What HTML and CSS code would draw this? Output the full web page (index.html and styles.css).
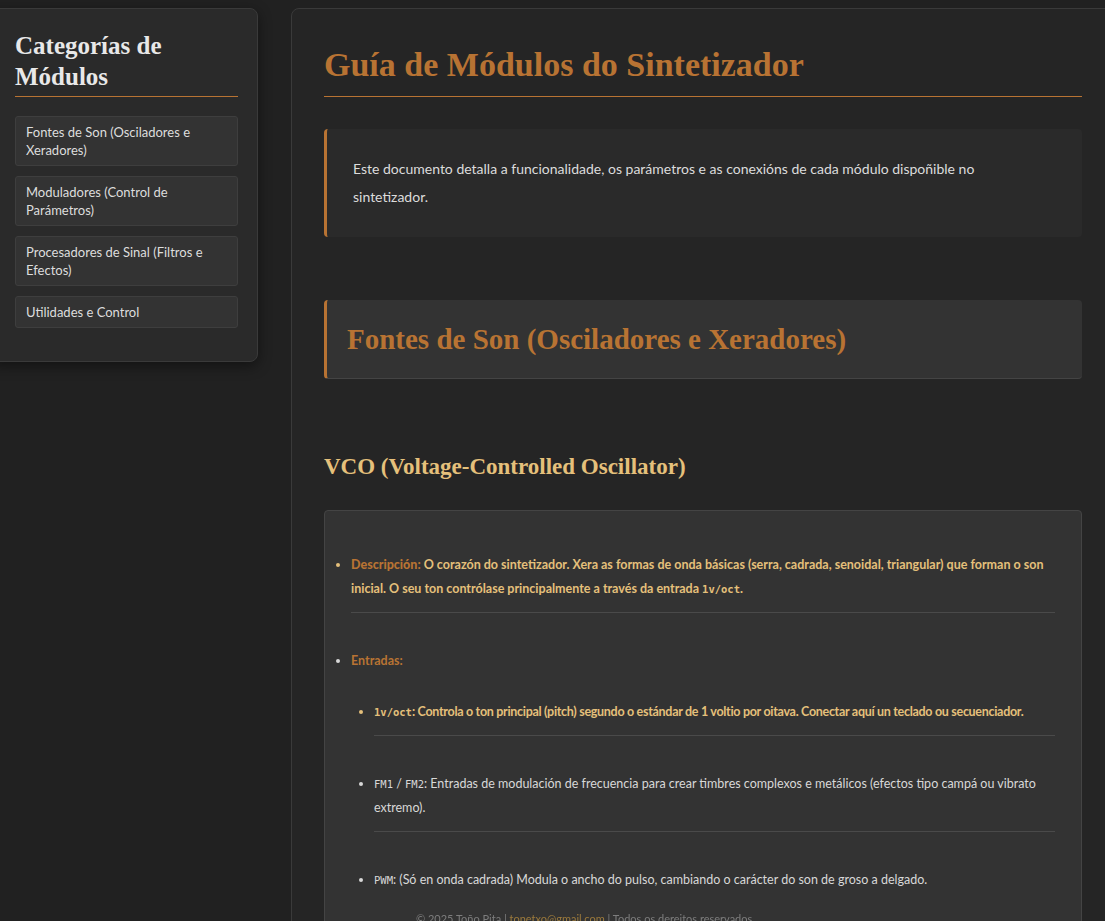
FILE: index.html
```html
<!DOCTYPE html>
<html lang="gl">
<head>
<meta charset="utf-8">
<title>Guía de Módulos do Sintetizador</title>
<link rel="stylesheet" href="styles.css">
</head>
<body>
<div class="layout">
  <aside class="sidebar">
    <h2 class="sidebar-title">Categorías de Módulos</h2>
    <nav class="cat-nav">
      <a class="cat-link" href="#fontes">Fontes de Son (Osciladores e Xeradores)</a>
      <a class="cat-link" href="#moduladores">Moduladores (Control de Parámetros)</a>
      <a class="cat-link" href="#procesadores">Procesadores de Sinal (Filtros e Efectos)</a>
      <a class="cat-link" href="#utilidades">Utilidades e Control</a>
    </nav>
  </aside>
  <main class="content">
    <h1 class="page-title">Guía de Módulos do Sintetizador</h1>
    <div class="intro">
      <p>Este documento detalla a funcionalidade, os parámetros e as conexións de cada módulo dispoñible no sintetizador.</p>
    </div>
    <h2 class="section-title" id="fontes">Fontes de Son (Osciladores e Xeradores)</h2>
    <h3 class="module-title">VCO (Voltage-Controlled Oscillator)</h3>
    <div class="module-card">
      <ul class="props">
        <li class="hl"><strong>Descripción:</strong> O corazón do sintetizador. Xera as formas de onda básicas (serra, cadrada, senoidal, triangular) que forman o son inicial. O seu ton contrólase principalmente a través da entrada <code>1v/oct</code>.</li>
        <li class="group"><strong>Entradas:</strong>
          <ul class="sub">
            <li class="hl tight"><code>1v/oct</code>: Controla o ton principal (pitch) segundo o estándar de 1 voltio por oitava. Conectar aquí un teclado ou secuenciador.</li>
            <li><code>FM1</code> / <code>FM2</code>: Entradas de modulación de frecuencia para crear timbres complexos e metálicos (efectos tipo campá ou vibrato extremo).</li>
            <li><code>PWM</code>: (Só en onda cadrada) Modula o ancho do pulso, cambiando o carácter do son de groso a delgado.</li>
          </ul>
        </li>
      </ul>
    </div>
  </main>
</div>
<footer class="footer">© 2025 Toño Pita | <a class="footer-link" href="mailto:tonetxo@gmail.com">tonetxo@gmail.com</a> | Todos os dereitos reservados.</footer>
</body>
</html>
```

FILE: styles.css
```css
html, body {
  margin: 0;
  padding: 0;
  background: #212121;
  overflow: hidden;
}
body {
  font-family: "Lato", "Noto Sans", sans-serif;
  color: #d8d8d8;
  height: 921px;
}
.layout {
  display: flex;
  align-items: flex-start;
  gap: 33px;
  padding-top: 8px;
  margin-left: -10px;
  width: 1160px;
}
.sidebar {
  flex: 0 0 268px;
  box-sizing: border-box;
  background: #2a2a2a;
  border: 1px solid #3a3a3a;
  border-radius: 8px;
  box-shadow: 0 4px 14px rgba(0,0,0,0.45);
  padding: 21px 19px 33px 24px;
}
.sidebar-title {
  font-family: "Liberation Serif", serif;
  font-weight: bold;
  font-size: 25px;
  line-height: 31px;
  color: #e8e8e8;
  margin: 0 0 19px;
  padding-bottom: 4px;
  border-bottom: 1px solid #b87333;
}
.cat-nav {
  display: flex;
  flex-direction: column;
  gap: 10px;
}
.cat-link {
  display: block;
  background: #333;
  border: 1px solid #3e3e3e;
  border-radius: 3px;
  padding: 6px 10px;
  font-size: 13px;
  line-height: 18px;
  color: #ddd;
  text-decoration: none;
}
.content {
  flex: 0 0 824px;
  box-sizing: border-box;
  min-height: 1000px;
  background: #252525;
  border: 1px solid #3a3a3a;
  border-radius: 8px;
  padding: 36px 32px 40px;
}
.page-title {
  font-family: "Liberation Serif", serif;
  font-weight: bold;
  font-size: 34px;
  line-height: 40px;
  color: #b87333;
  margin: 0 0 32px;
  padding-bottom: 11px;
  border-bottom: 1px solid #b87333;
}
.intro {
  background: #2a2a2a;
  border-left: 3px solid #b87333;
  border-radius: 4px;
  padding: 26px 90px 26px 26px;
}
.intro p {
  margin: 0;
  font-size: 14px;
  line-height: 28px;
  color: #dcdcdc;
}
.section-title {
  font-family: "Liberation Serif", serif;
  font-weight: bold;
  font-size: 29px;
  line-height: 36px;
  color: #b87333;
  background: #333;
  border-left: 3px solid #b87333;
  border-bottom: 1px solid #444;
  border-radius: 4px;
  margin: 63px 0 0;
  padding: 21px 20px;
}
.module-title {
  font-family: "Liberation Serif", serif;
  font-weight: bold;
  font-size: 23px;
  line-height: 30px;
  color: #e5c07b;
  margin: 73px 0 28px;
}
.module-card {
  background: #333;
  border: 1px solid #444;
  border-radius: 4px;
  padding: 6px 26px 80px;
}
.props, .sub {
  list-style: disc;
  margin: 0;
  padding: 0;
}
.sub {
  padding-left: 23px;
  margin-top: -9px;
}
.props li {
  font-size: 12.5px;
  line-height: 24px;
  padding: 36px 0 11px;
  border-bottom: 1px solid #4a4a4a;
  color: #d8d8d8;
}
.props li.group,
.props li:last-child {
  border-bottom: none;
}
.props li.hl {
  color: #e5c07b;
  font-weight: bold;
}
.props li.tight {
  letter-spacing: -0.3px;
}
.props li.group > strong,
.props li.hl > strong {
  color: #b87333;
}
code {
  font-family: "DejaVu Sans Mono", monospace;
  font-size: 10.5px;
  letter-spacing: 0;
}
.footer {
  position: fixed;
  left: 416px;
  bottom: -5px;
  font-size: 11px;
  line-height: 14px;
  color: #7d7d7d;
}
.footer-link {
  color: #9c7a3c;
  text-decoration: none;
}
```
